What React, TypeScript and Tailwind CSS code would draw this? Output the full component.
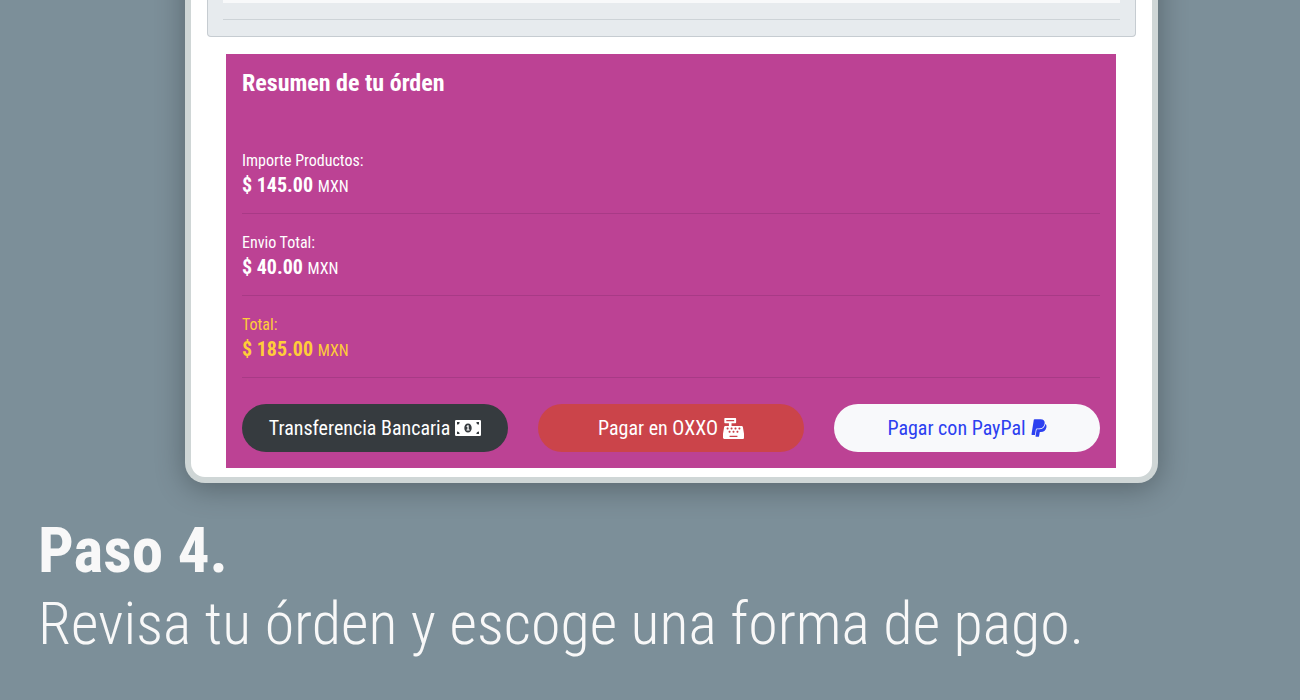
import React from 'react';
import { FaCashRegister, FaPaypal } from 'react-icons/fa';

function BillIcon() {
  return (
    <svg viewBox="0 0 26 16" className="h-4 w-[26px]" fill="currentColor" aria-hidden="true">
      <path
        fillRule="evenodd"
        d="M1.2 0H24.8Q26 0 26 1.2V14.8Q26 16 24.8 16H1.2Q0 16 0 14.8V1.2Q0 0 1.2 0ZM2 2V4.6A2.600 2.600 0 0 0 4.6 2ZM24 2H21.4A2.600 2.600 0 0 0 24 4.6ZM2 14H4.6A2.600 2.600 0 0 0 2 11.4ZM24 14V11.4A2.600 2.600 0 0 0 21.4 14ZM13 3.4C10.8 3.4 9.3 5.5 9.3 8S10.8 12.6 13 12.6S16.7 10.5 16.7 8S15.2 3.4 13 3.4Z"
      />
      <path d="M12.6 5.3H13.7V9.5H14.6V10.5H11.5V9.5H12.4V6.8L11.6 7V6Z" />
    </svg>
  );
}

type Line = { label: string; amount: string; highlight?: boolean };

const lines: Line[] = [
  { label: 'Importe Productos:', amount: '$ 145.00' },
  { label: 'Envio Total:', amount: '$ 40.00' },
  { label: 'Total:', amount: '$ 185.00', highlight: true },
];

const pill = 'flex h-12 items-center justify-center gap-[5px] rounded-full text-xl leading-6';

export default function App() {
  return (
    <div className="min-h-screen overflow-hidden bg-[#7c8f99] pb-9 font-['Roboto_Condensed',Roboto,sans-serif] text-white">
      <main className="-mt-10 mr-[142px] ml-[185px] rounded-b-[20px] border-x-[6px] border-b-[6px] border-[#cfd6d6] bg-white pt-10 pb-[9px] shadow-[0_5px_30px_rgba(0,0,0,0.3)]">
        <div className="mx-4 rounded-b border-x border-b border-[#c6ccd1] bg-[#e7ebee] px-[15px] pb-4">
          <div className="h-[3px] bg-[#f8f9fa]" />
          <hr className="mt-4 border-[#cdd3d7]" />
        </div>
        <section className="mt-[17px] mr-9 ml-[35px] bg-[#bc4294] px-4 pt-[15px] pb-4">
          <h2 className="mb-[52px] text-2xl leading-7 font-bold">Resumen de tu órden</h2>
          {lines.map((line) => (
            <div
              key={line.label}
              className={`mb-[17px] border-b border-[#a83a86] pb-[14px] ${line.highlight ? 'text-[#ffcd39]' : ''}`}
            >
              <p className="text-base leading-6">{line.label}</p>
              <p className="text-base leading-6">
                <strong className="text-xl leading-6 font-bold">{line.amount} </strong>MXN
              </p>
            </div>
          ))}
          <div className="mt-[26px] grid grid-cols-3 gap-[30px]">
            <button type="button" className={`${pill} bg-[#363b3f]`}>
              Transferencia Bancaria <BillIcon />
            </button>
            <button type="button" className={`${pill} bg-[#cb444a]`}>
              Pagar en OXXO <FaCashRegister className="size-[21px]" aria-hidden="true" />
            </button>
            <button type="button" className={`${pill} bg-[#f8f9fb] text-[#2c40f0]`}>
              Pagar con PayPal <FaPaypal className="h-5 w-4" aria-hidden="true" />
            </button>
          </div>
        </section>
      </main>
      <div className="mt-[30px] px-[38px] text-[#f8f8f8]">
        <h1 className="text-[63px] leading-[76px] font-bold">Paso 4.</h1>
        <p className="text-[60px] leading-[70px] font-light">Revisa tu órden y escoge una forma de pago.</p>
      </div>
    </div>
  );
}
